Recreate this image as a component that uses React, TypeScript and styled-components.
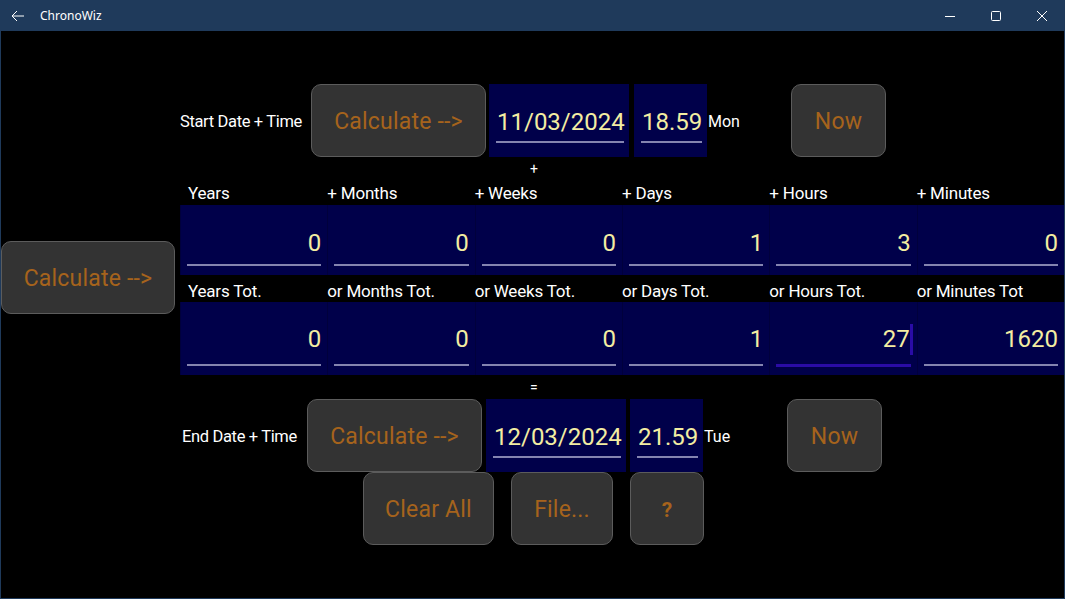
import styled, { createGlobalStyle } from 'styled-components';

const colors = {
  TITLE: '#1f3a5b',
  NAVY: '#00004a',
  BUTTON: '#333333',
  BUTTON_BORDER: '#5c5c5c',
  ORANGE: '#a6631c',
  YELLOW: '#f3eda2',
  LINE: '#8484b0',
  FOCUS: '#2a0ca6',
  WHITE: '#ffffff',
};

const GlobalStyle = createGlobalStyle`
  html, body {
    margin: 0;
    padding: 0;
    background: #000;
  }
  body {
    font-family: Roboto, "Noto Sans", "Liberation Sans", sans-serif;
  }
`;

const Window = styled.div`
  width: 1065px;
  height: 599px;
  box-sizing: border-box;
  border: 1px solid ${colors.TITLE};
  border-top: none;
  background: #000;
  overflow: hidden;
  display: flex;
  flex-direction: column;
`;

const TitleBar = styled.div`
  height: 31px;
  flex-shrink: 0;
  background: ${colors.TITLE};
  display: flex;
  align-items: center;
  color: ${colors.WHITE};
  margin: 0 -1px;
`;

const BackBtn = styled.div`
  width: 38px;
  display: flex;
  justify-content: center;
  padding-right: 2px;
  box-sizing: border-box;
`;

const AppTitle = styled.div`
  font-family: "Segoe UI", "Noto Sans", "Liberation Sans", sans-serif;
  font-size: 12px;
  flex: 1;
  padding-left: 2px;
`;

const Controls = styled.div`
  display: flex;
`;

const ControlBtn = styled.div`
  width: 46px;
  height: 31px;
  display: flex;
  align-items: center;
  justify-content: center;
`;

const Content = styled.div`
  display: flex;
  flex-direction: column;
  padding-top: 53px;
`;

const DateRow = styled.div<{ $left: number }>`
  display: flex;
  align-items: center;
  height: 73px;
  padding-left: ${p => p.$left}px;
`;

const RowLabel = styled.div<{ $width: number }>`
  width: ${p => p.$width}px;
  color: ${colors.WHITE};
  font-size: 16.5px;
  letter-spacing: -0.35px;
  white-space: nowrap;
  padding-top: 2px;
`;

const Button = styled.div<{ $width: number; $size?: number; $bold?: boolean }>`
  width: ${p => p.$width}px;
  height: 73px;
  box-sizing: border-box;
  flex-shrink: 0;
  background: ${colors.BUTTON};
  border: 1px solid ${colors.BUTTON_BORDER};
  border-radius: 10px;
  color: ${colors.ORANGE};
  font-size: ${p => p.$size ?? 23}px;
  font-weight: ${p => (p.$bold ? 700 : 400)};
  letter-spacing: ${p => (p.$bold ? 0 : 0.2)}px;
  padding-top: 2px;
  display: flex;
  align-items: center;
  justify-content: center;
  white-space: nowrap;
`;

const FieldBox = styled.div<{ $width: number; $ml: number }>`
  width: ${p => p.$width}px;
  height: 73px;
  margin-left: ${p => p.$ml}px;
  flex-shrink: 0;
  background: ${colors.NAVY};
  box-sizing: border-box;
  padding: 0 5px 0 7px;
  display: flex;
  flex-direction: column;
`;

const FieldText = styled.div`
  height: 57px;
  display: flex;
  align-items: center;
  padding-top: 18px;
  box-sizing: border-box;
  color: ${colors.YELLOW};
  font-size: 24px;
  white-space: nowrap;
  padding-left: 1px;
`;

const Underline = styled.div<{ $focus?: boolean }>`
  height: ${p => (p.$focus ? 3 : 2)}px;
  background: ${p => (p.$focus ? colors.FOCUS : colors.LINE)};
`;

const DayName = styled.div<{ $width: number }>`
  width: ${p => p.$width}px;
  color: ${colors.WHITE};
  font-size: 16px;
  padding-left: 1px;
  padding-top: 2px;
`;

const Sign = styled.div<{ $height: number }>`
  height: ${p => p.$height}px;
  display: flex;
  align-items: center;
  padding-left: 529px;
  color: ${colors.WHITE};
  font-size: 14px;
`;

const Middle = styled.div`
  display: flex;
  align-items: center;
`;

const LeftSide = styled.div`
  width: 179px;
  flex-shrink: 0;
  display: flex;
  margin-top: -2px;
`;

const Grid = styled.div`
  width: 885px;
  display: grid;
  grid-template-columns: repeat(6, 1fr);
`;

const ColLabel = styled.div<{ $height: number; $first?: boolean; $pad: number }>`
  height: ${p => p.$height}px;
  box-sizing: border-box;
  display: flex;
  align-items: center;
  padding-left: ${p => (p.$first ? 8 : 0)}px;
  padding-top: ${p => p.$pad}px;
  color: ${colors.WHITE};
  font-size: 17px;
  letter-spacing: -0.2px;
  white-space: nowrap;
`;

const Cell = styled.div<{ $height: number }>`
  height: ${p => p.$height}px;
  background: ${colors.NAVY};
  border-left: 1px solid #00003c;
  box-sizing: border-box;
  padding: 0 6px 0 6px;
  display: flex;
  flex-direction: column;
  justify-content: flex-end;
`;

const CellValue = styled.div<{ $pad: number }>`
  flex: 1;
  display: flex;
  align-items: center;
  justify-content: flex-end;
  padding-top: ${p => p.$pad}px;
  color: ${colors.YELLOW};
  font-size: 24px;
`;

const Caret = styled.span`
  display: inline-block;
  width: 3px;
  height: 31px;
  margin-right: -2px;
  background: ${colors.FOCUS};
`;

const CellFoot = styled.div`
  height: 11px;
  display: flex;
  flex-direction: column;
  justify-content: flex-start;
`;

const BottomRow = styled.div`
  display: flex;
  padding-left: 362px;
  gap: 17px;
`;

const BackIcon = () => (
  <svg width="14" height="12" viewBox="0 0 14 12">
    <path d="M6 1 L1 6 L6 11 M1 6 H13" stroke="#fff" strokeWidth="1" fill="none" />
  </svg>
);

const MinIcon = () => (
  <svg width="10" height="10" viewBox="0 0 10 10">
    <path d="M0 5.5 H10" stroke="#fff" strokeWidth="1" />
  </svg>
);

const MaxIcon = () => (
  <svg width="10" height="10" viewBox="0 0 10 10">
    <rect x="0.5" y="0.5" width="9" height="9" rx="1" stroke="#fff" strokeWidth="1" fill="none" />
  </svg>
);

const CloseIcon = () => (
  <svg width="10" height="10" viewBox="0 0 10 10">
    <path d="M0 0 L10 10 M10 0 L0 10" stroke="#fff" strokeWidth="1" />
  </svg>
);

const addLabels = ['Years', '+ Months', '+ Weeks', '+ Days', '+ Hours', '+ Minutes'];
const addValues = ['0', '0', '0', '1', '3', '0'];
const totLabels = ['Years Tot.', 'or Months Tot.', 'or Weeks Tot.', 'or Days Tot.', 'or Hours Tot.', 'or Minutes Tot'];
const totValues = ['0', '0', '0', '1', '27', '1620'];

interface DateLineProps {
  label: string;
  left: number;
  labelWidth: number;
  date: string;
  time: string;
  day: string;
  gaps: [number, number];
}

const DateLine = ({ label, left, labelWidth, date, time, day, gaps }: DateLineProps) => (
  <DateRow $left={left}>
    <RowLabel $width={labelWidth}>{label}</RowLabel>
    <Button $width={175}>Calculate --&gt;</Button>
    <FieldBox $width={140} $ml={gaps[0]}>
      <FieldText>{date}</FieldText>
      <Underline />
    </FieldBox>
    <FieldBox $width={73} $ml={gaps[1]}>
      <FieldText>{time}</FieldText>
      <Underline />
    </FieldBox>
    <DayName $width={83}>{day}</DayName>
    <Button $width={95}>Now</Button>
  </DateRow>
);

const App = () => {
  return (
    <>
      <GlobalStyle />
      <Window>
        <TitleBar>
          <BackBtn>
            <BackIcon />
          </BackBtn>
          <AppTitle>ChronoWiz</AppTitle>
          <Controls>
            <ControlBtn><MinIcon /></ControlBtn>
            <ControlBtn><MaxIcon /></ControlBtn>
            <ControlBtn><CloseIcon /></ControlBtn>
          </Controls>
        </TitleBar>
        <Content>
          <DateLine
            label="Start Date + Time"
            left={179}
            labelWidth={131}
            date="11/03/2024"
            time="18.59"
            day="Mon"
            gaps={[3, 5]}
          />
          <Sign $height={24}>+</Sign>
          <Middle>
            <LeftSide>
              <Button $width={174}>Calculate --&gt;</Button>
            </LeftSide>
            <Grid>
              {addLabels.map((l, i) => (
                <ColLabel key={l} $height={24} $first={i === 0} $pad={0}>{l}</ColLabel>
              ))}
              {addValues.map((v, i) => (
                <Cell key={'a' + i} $height={70}>
                  <CellValue $pad={16}>{v}</CellValue>
                  <CellFoot><Underline /></CellFoot>
                </Cell>
              ))}
              {totLabels.map((l, i) => (
                <ColLabel key={l} $height={27} $first={i === 0} $pad={5}>{l}</ColLabel>
              ))}
              {totValues.map((v, i) => (
                <Cell key={'t' + i} $height={73}>
                  <CellValue $pad={12}>
                    {v}
                    {i === 4 && <Caret />}
                  </CellValue>
                  <CellFoot>
                    <Underline $focus={i === 4} />
                  </CellFoot>
                </Cell>
              ))}
            </Grid>
          </Middle>
          <Sign $height={24}>=</Sign>
          <DateLine
            label="End Date + Time"
            left={181}
            labelWidth={125}
            date="12/03/2024"
            time="21.59"
            day="Tue"
            gaps={[4, 4]}
          />
          <BottomRow>
            <Button $width={131}>Clear All</Button>
            <Button $width={102}>File...</Button>
            <Button $width={74} $size={21} $bold>?</Button>
          </BottomRow>
        </Content>
      </Window>
    </>
  );
};

export default App;
